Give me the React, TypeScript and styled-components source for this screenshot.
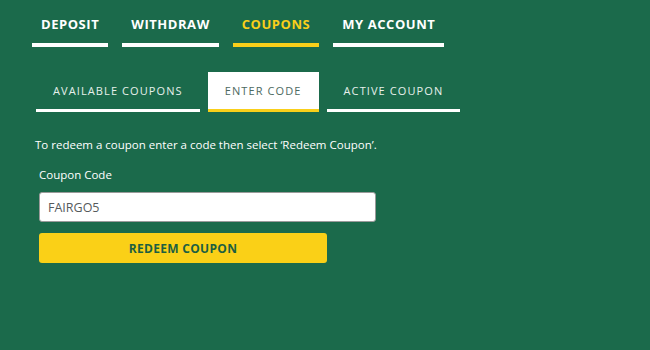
import React, { useState } from "react";
import styled, { createGlobalStyle } from "styled-components";

const GlobalStyle = createGlobalStyle`
  html, body {
    margin: 0;
    padding: 0;
    background: #1b6a4b;
  }
  body {
    font-family: "Open Sans", "Liberation Sans", sans-serif;
    width: 650px;
    height: 350px;
    overflow: hidden;
  }
`;

const Page = styled.div`
  padding-left: 32px;
  display: flex;
  flex-direction: column;
`;

const MainNav = styled.nav`
  display: flex;
  gap: 14px;
`;

const MainTab = styled.div<{ $active?: boolean }>`
  padding: 16px 9px 10px;
  line-height: 17px;
  font-size: 13px;
  font-weight: 700;
  letter-spacing: 0.55px;
  color: ${(p) => (p.$active ? "#f9cf1a" : "#ffffff")};
  border-bottom: 4px solid ${(p) => (p.$active ? "#f9cf1a" : "#ffffff")};
  white-space: nowrap;
`;

const SubNav = styled.div`
  display: flex;
  gap: 8px;
  margin: 25px 0 0 4px;
`;

const SubTab = styled.div<{ $active?: boolean }>`
  height: 37px;
  padding: 0 17px;
  display: flex;
  align-items: center;
  font-size: 11px;
  font-weight: 500;
  letter-spacing: 1.1px;
  white-space: nowrap;
  color: ${(p) => (p.$active ? "#4d6a61" : "#e6f0eb")};
  background: ${(p) => (p.$active ? "#ffffff" : "transparent")};
  border-bottom: 3px solid ${(p) => (p.$active ? "#f9cf1a" : "#ffffff")};
`;

const Intro = styled.p`
  margin: 25px 0 0 3px;
  font-size: 11.5px;
  line-height: 16px;
  color: #ffffff;
`;

const Form = styled.div`
  margin-left: 7px;
  display: flex;
  flex-direction: column;
`;

const Label = styled.label`
  margin-top: 14px;
  font-size: 11.5px;
  line-height: 16px;
  color: #ffffff;
`;

const Input = styled.input`
  margin-top: 9px;
  box-sizing: border-box;
  width: 337px;
  height: 30px;
  padding: 0 8px;
  border: 1px solid #9a9a9a;
  border-radius: 3px;
  background: #ffffff;
  font-family: "Open Sans", "Liberation Sans", sans-serif;
  font-size: 12.5px;
  color: #555a5c;
  outline: none;
`;

const RedeemButton = styled.button`
  margin-top: 11px;
  width: 288px;
  height: 30px;
  border: none;
  border-radius: 3px;
  background: #fad017;
  color: #1d5f41;
  font-family: "Open Sans", "Liberation Sans", sans-serif;
  font-size: 12px;
  font-weight: 700;
  letter-spacing: 0.3px;
  cursor: pointer;
`;

export default function App() {
  const [code, setCode] = useState("FAIRGO5");
  return (
    <>
      <GlobalStyle />
      <Page>
        <MainNav>
          <MainTab>DEPOSIT</MainTab>
          <MainTab>WITHDRAW</MainTab>
          <MainTab $active>COUPONS</MainTab>
          <MainTab>MY ACCOUNT</MainTab>
        </MainNav>
        <SubNav>
          <SubTab>AVAILABLE COUPONS</SubTab>
          <SubTab $active>ENTER CODE</SubTab>
          <SubTab>ACTIVE COUPON</SubTab>
        </SubNav>
        <Intro>To redeem a coupon enter a code then select ‘Redeem Coupon’.</Intro>
        <Form>
          <Label htmlFor="coupon">Coupon Code</Label>
          <Input id="coupon" value={code} onChange={(e) => setCode(e.target.value)} />
          <RedeemButton>REDEEM COUPON</RedeemButton>
        </Form>
      </Page>
    </>
  );
}
